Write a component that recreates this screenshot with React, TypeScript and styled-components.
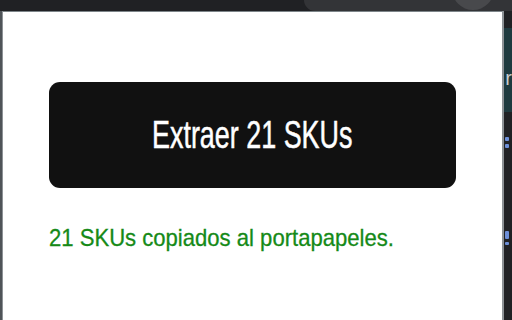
import React from "react";
import styled, { createGlobalStyle } from "styled-components";

const GlobalStyle = createGlobalStyle`
  html, body {
    margin: 0;
    padding: 0;
    background: #202124;
    font-family: "Liberation Sans", Arial, sans-serif;
  }
`;

const Window = styled.div`
  width: 512px;
  height: 320px;
  display: flex;
  flex-direction: column;
  overflow: hidden;
  background: #202124;
`;

const TopBar = styled.div`
  height: 11px;
  display: flex;
  overflow: hidden;
  background: #202124;
`;

const TabSpacer = styled.div`
  flex: 1;
`;

const ActiveTab = styled.div`
  width: 190px;
  display: flex;
  justify-content: flex-end;
  padding-right: 18px;
  background: #333437;
  border-bottom-left-radius: 12px;
`;

const Avatar = styled.div`
  width: 42px;
  height: 42px;
  margin-top: -32px;
  border-radius: 50%;
  background: #48494c;
`;

const Body = styled.div`
  flex: 1;
  display: flex;
`;

const LeftEdge = styled.div`
  width: 2px;
  background: #4f5458;
  border-right: 1px solid #8d9296;
`;

const Popup = styled.div`
  width: 500px;
  border-top: 1px solid #7d8589;
  background: #ffffff;
  padding: 70px 46px 0;
  box-sizing: border-box;
  display: flex;
  flex-direction: column;
`;

const ExtractButton = styled.button`
  height: 106px;
  width: 100%;
  border: none;
  border-radius: 11px;
  background: #111111;
  color: #ffffff;
  display: flex;
  align-items: center;
  justify-content: center;
  padding: 0 0 2px;
  font-family: "Liberation Sans", Arial, sans-serif;
  font-size: 39px;
  line-height: 1;
  -webkit-text-stroke: 0.5px #ffffff;
  cursor: pointer;
`;

const Squeezed = styled.span<{ $scale: number; $origin?: string }>`
  display: inline-block;
  white-space: nowrap;
  transform: scaleX(${(p) => p.$scale});
  transform-origin: ${(p) => p.$origin ?? "center"};
`;

const Status = styled.div`
  margin-top: 36px;
  color: #158a17;
  font-size: 24px;
  line-height: 28px;
  -webkit-text-stroke: 0.3px #158a17;
`;

const SideStrip = styled.div`
  flex: 1;
  display: flex;
  flex-direction: column;
  border-left: 2px solid #8d9296;
  background: #202124;
`;

const SideGap = styled.div`
  height: 17px;
`;

const SideBanner = styled.div`
  height: 84px;
  background: #1e3a3f;
  color: #c9cdd0;
  font-size: 20px;
  line-height: 20px;
  padding: 40px 0 0 1px;
  box-sizing: border-box;
  overflow: hidden;
`;

const SideRest = styled.div`
  display: flex;
  flex-direction: column;
  padding: 25px 0 0 1px;
  gap: 3px;
`;

const Dot = styled.div<{ $h: number; $mt?: number }>`
  width: 4px;
  height: ${(p) => p.$h}px;
  margin-top: ${(p) => p.$mt ?? 0}px;
  border-radius: 1px;
  background: #6d8fd8;
`;

export default function App() {
  return (
    <>
      <GlobalStyle />
      <Window>
        <TopBar>
          <TabSpacer />
          <ActiveTab>
            <Avatar />
          </ActiveTab>
        </TopBar>
        <Body>
          <LeftEdge />
          <Popup>
            <ExtractButton>
              <Squeezed $scale={0.69}>Extraer 21 SKUs</Squeezed>
            </ExtractButton>
            <Status>
              <Squeezed $scale={0.92} $origin="left">
                21 SKUs copiados al portapapeles.
              </Squeezed>
            </Status>
          </Popup>
          <SideStrip>
            <SideGap />
            <SideBanner>r</SideBanner>
            <SideRest>
              <Dot $h={4} />
              <Dot $h={4} />
              <Dot $h={8} $mt={80} />
              <Dot $h={3} />
            </SideRest>
          </SideStrip>
        </Body>
      </Window>
    </>
  );
}
